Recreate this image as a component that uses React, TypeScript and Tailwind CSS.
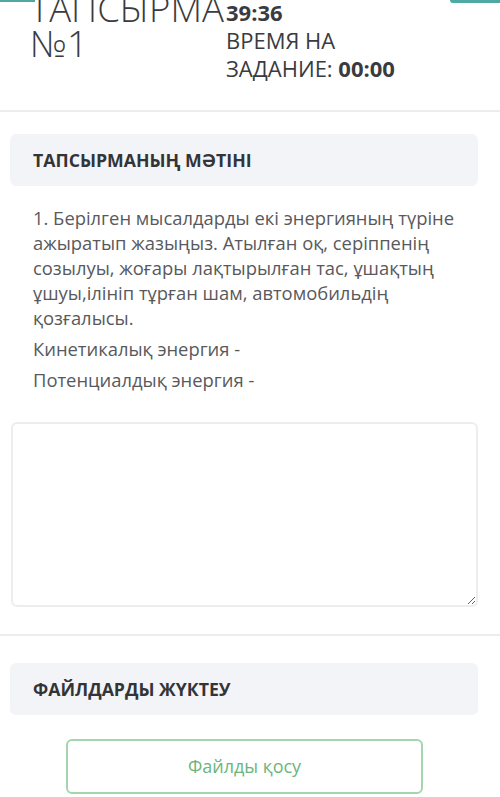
import React from "react";

const font = { fontFamily: '"Open Sans", "Noto Sans", sans-serif' };

const SectionHeader: React.FC<{ title: string }> = ({ title }) => (
  <div className="ml-[10px] mr-[22px] h-[52px] flex items-center rounded-md bg-[#f3f4f7] pl-[23px]">
    <h2 className="text-[17.7px] leading-6 font-bold text-[#333438]">{title}</h2>
  </div>
);

export default function App() {
  return (
    <div className="relative w-[500px] h-[797px] overflow-hidden bg-white" style={font}>
      {/* remnants of the bar scrolled off the top */}
      <div className="absolute left-0 top-0 w-[35px] h-[2px] bg-[#4fa9a3]" />
      <div className="absolute right-0 top-0 w-[50px] h-[3px] rounded-bl-md bg-[#4fa9a3]" />

      {/* header */}
      <div className="h-[110px] flex pl-[30px] text-[#3a3b3f]">
        <div className="w-[196px] -mt-[9px] text-[36.5px] leading-[35px] font-light whitespace-nowrap">
          ТАПСЫРМА
          <br />
          №1
        </div>
        <div className="w-[200px] -mt-[2px] text-[22px] leading-[28px]">
          <div className="font-bold">39:36</div>
          <div>
            ВРЕМЯ НА ЗАДАНИЕ: <span className="font-bold">00:00</span>
          </div>
        </div>
      </div>
      <div className="h-[2px] bg-[#ececec]" />

      {/* task text */}
      <div className="mt-[22px]">
        <SectionHeader title="ТАПСЫРМАНЫҢ МӘТІНІ" />
      </div>
      <div className="mt-[19px] pl-[33px] pr-[40px] text-[18.4px] leading-[25px] text-[#58595d] flex flex-col gap-[6px]">
        <p>
          1. Берілген мысалдарды екі энергияның түріне ажыратып жазыңыз. Атылған оқ, серіппенің
          созылуы, жоғары лақтырылған тас, ұшақтың ұшуы,ілініп тұрған шам, автомобильдің
          қозғалысы.
        </p>
        <p>Кинетикалық энергия -</p>
        <p>Потенциалдық энергия -</p>
      </div>

      <div className="mt-[30px] ml-[11px] mr-[22px]">
        <textarea
          className="block w-full h-[185px] rounded-md border-2 border-[#ededed] bg-white outline-none"
          style={font}
        />
      </div>

      <div className="mt-[27px] h-[2px] bg-[#ececec]" />

      {/* file upload */}
      <div className="mt-[27px]">
        <SectionHeader title="ФАЙЛДАРДЫ ЖҮКТЕУ" />
      </div>
      <div className="mt-[24px] pl-[66px]">
        <button className="w-[357px] h-[55px] rounded-md border-2 border-[#a3d6ad] bg-white text-[18px] text-[#6db57e]">
          Файлды қосу
        </button>
      </div>
    </div>
  );
}
